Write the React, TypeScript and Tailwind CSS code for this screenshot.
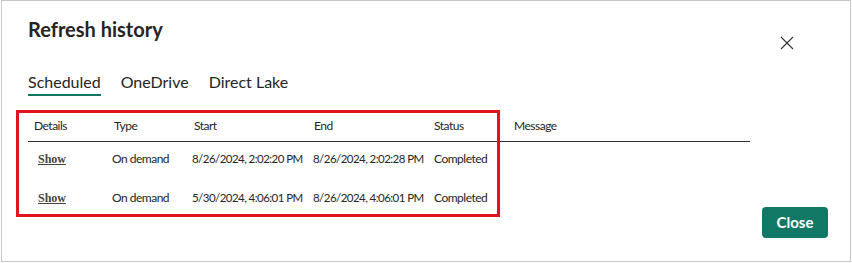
import React from "react";

const rows = [
  { type: "On demand", start: "8/26/2024, 2:02:20 PM", end: "8/26/2024, 2:02:28 PM", status: "Completed" },
  { type: "On demand", start: "5/30/2024, 4:06:01 PM", end: "8/26/2024, 4:06:01 PM", status: "Completed" },
];

export default function App() {
  return (
    <div className="w-[852px] h-[263px] bg-white relative font-['Lato',sans-serif] text-[#252423]">
      <div className="ml-[1px] w-[850px] h-[262px] border border-[#c8c8c8] relative">
        <div className="flex items-start justify-between pl-[26px] pr-[56px] pt-[14px]">
          <h1 className="text-[20px] leading-[28px] font-bold">Refresh history</h1>
          <button className="mt-[21px] w-[14px] h-[14px] flex items-center justify-center text-[#333]">
            <svg width="14" height="14" viewBox="0 0 14 14" fill="none" stroke="currentColor" strokeWidth="1.1">
              <path d="M1 1 L13 13 M13 1 L1 13" />
            </svg>
          </button>
        </div>
        <div className="flex gap-[20px] pl-[26px] mt-[21px] text-[16px] leading-[22px]">
          <div className="border-b-2 border-[#117865] pb-[1px]">Scheduled</div>
          <div>OneDrive</div>
          <div>Direct Lake</div>
        </div>
        <div className="ml-[26px] w-[722px] mt-[14px] text-[12px] tracking-[-0.5px] whitespace-nowrap">
          <div className="grid grid-cols-[80px_80px_120px_120px_80px_1fr] h-[32px] items-center border-b border-[#333] leading-[16px]">
            <div className="pl-[6px]">Details</div>
            <div className="pl-[6px]">Type</div>
            <div className="pl-[6px]">Start</div>
            <div className="pl-[6px]">End</div>
            <div className="pl-[6px]">Status</div>
            <div className="pl-[6px]">Message</div>
          </div>
          {rows.map((r, i) => (
            <div key={i} className="grid grid-cols-[80px_80px_120px_120px_80px_1fr] h-[39px] items-start pt-[9px] leading-[16px]">
              <div className="pl-[10px] tracking-normal">
                <a className="font-['Liberation_Serif',serif] font-bold underline text-[#444] text-[12px]">Show</a>
              </div>
              <div className="pl-[4px]">{r.type}</div>
              <div className="pl-[4px] text-[11.5px] tracking-[-0.55px]">{r.start}</div>
              <div className="pl-[5px] text-[11.5px] tracking-[-0.55px]">{r.end}</div>
              <div className="pl-[6px]">{r.status}</div>
              <div></div>
            </div>
          ))}
        </div>
        <div className="absolute right-[22px] bottom-[23px]">
          <button className="w-[66px] h-[31px] rounded-[4px] bg-[#117865] text-white text-[15px] font-bold">Close</button>
        </div>
        <div className="absolute left-[14px] top-[109px] w-[484px] h-[107px] border-[3px] border-[#e3141b] pointer-events-none"></div>
      </div>
    </div>
  );
}
